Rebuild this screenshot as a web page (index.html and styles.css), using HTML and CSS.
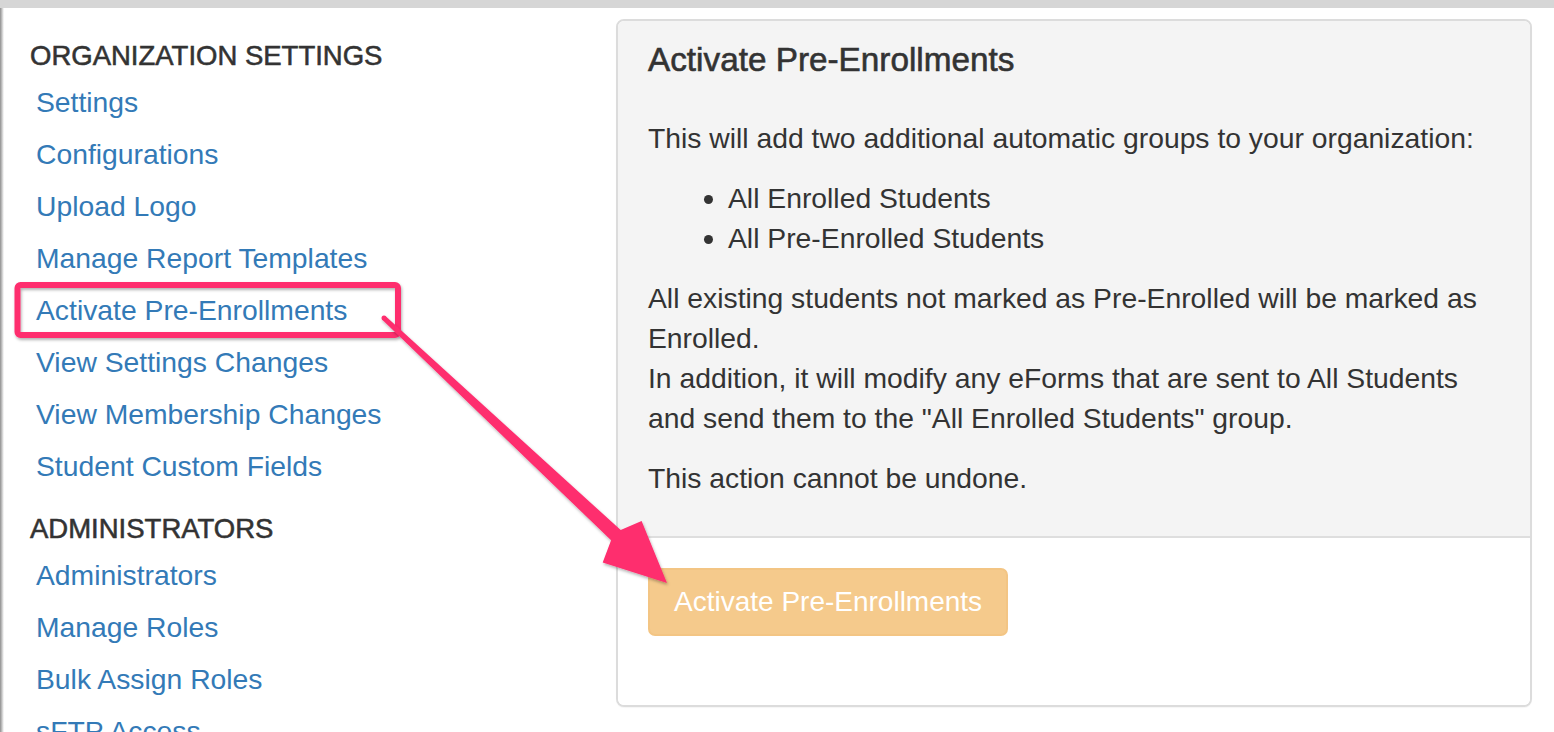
FILE: index.html
```html
<!DOCTYPE html>
<html lang="en">
<head>
<meta charset="utf-8">
<title>Activate Pre-Enrollments</title>
<link rel="stylesheet" href="styles.css">
</head>
<body>
<div class="topbar"></div>
<div class="layout">
  <div class="edge"></div>
  <nav class="sidebar">
    <h5 class="nav-heading">ORGANIZATION SETTINGS</h5>
    <a class="nav-link" href="#">Settings</a>
    <a class="nav-link" href="#">Configurations</a>
    <a class="nav-link" href="#">Upload Logo</a>
    <a class="nav-link" href="#">Manage Report Templates</a>
    <a class="nav-link" href="#">Activate Pre-Enrollments</a>
    <a class="nav-link" href="#">View Settings Changes</a>
    <a class="nav-link" href="#">View Membership Changes</a>
    <a class="nav-link" href="#">Student Custom Fields</a>
    <h5 class="nav-heading nav-heading-next">ADMINISTRATORS</h5>
    <a class="nav-link" href="#">Administrators</a>
    <a class="nav-link" href="#">Manage Roles</a>
    <a class="nav-link" href="#">Bulk Assign Roles</a>
    <a class="nav-link" href="#">sFTP Access</a>
  </nav>
  <main class="main">
    <section class="panel">
      <div class="panel-body">
        <h4 class="panel-title">Activate Pre-Enrollments</h4>
        <p>This will add two additional automatic groups to your organization:</p>
        <ul class="groups">
          <li>All Enrolled Students</li>
          <li>All Pre-Enrolled Students</li>
        </ul>
        <p>All existing students not marked as Pre-Enrolled will be marked as Enrolled.<br>In addition, it will modify any eForms that are sent to All Students and send them to the "All Enrolled Students" group.</p>
        <p>This action cannot be undone.</p>
      </div>
      <div class="panel-footer">
        <button class="btn-activate" type="button" disabled>Activate Pre-Enrollments</button>
      </div>
    </section>
  </main>
</div>
<svg class="annotations" width="1554" height="732" viewBox="0 0 1554 732" aria-hidden="true">
  <defs>
    <filter id="shadow" x="-10%" y="-10%" width="130%" height="130%">
      <feDropShadow dx="1" dy="2" stdDeviation="1.5" flood-color="#000" flood-opacity="0.3"/>
    </filter>
  </defs>
  <rect x="17.5" y="285" width="380.5" height="50" rx="3" fill="none" stroke="#fe2d6e" stroke-width="6" filter="url(#shadow)"/>
  <g filter="url(#shadow)">
    <polygon fill="#fe2d6e" points="385.7,316.2 620.7,530.1 641.6,520.9 667,583 602.7,562.5 611.1,540.3 382.3,319.8"/>
    <circle cx="384" cy="318" r="2.5" fill="#fe2d6e"/>
  </g>
</svg>
</body>
</html>
```

FILE: styles.css
```css
html, body {
  margin: 0;
  padding: 0;
  overflow: hidden;
  height: 100%;
}

body {
  position: relative;
  background: #ffffff;
  font-family: "Liberation Sans", Arial, sans-serif;
  font-size: 28.3px;
  line-height: 40px;
  color: #333333;
}

.topbar {
  height: 8px;
  background: #d6d6d6;
}

.layout {
  display: flex;
  align-items: flex-start;
  height: 724px;
}

.edge {
  width: 4px;
  align-self: stretch;
  flex: none;
  background: linear-gradient(to right, #8e8e8e 0, #b8b8b8 1.5px, #e4e4e4 3px, #ffffff 4px);
}

.sidebar {
  width: 586px;
  flex: none;
  padding: 28px 0 0 26px;
  display: flex;
  flex-direction: column;
  align-items: flex-start;
}

.nav-heading {
  margin: 0;
  font-size: 27.5px;
  line-height: 40px;
  font-weight: 400;
  color: #333333;
  -webkit-text-stroke: 0.55px #333333;
}

.nav-heading-next {
  margin-top: 17px;
  margin-bottom: 0;
}

.nav-link {
  display: block;
  padding-left: 6px;
  font-size: 28.3px;
  line-height: 52px;
  color: #337ab7;
  text-decoration: none;
}

.main {
  flex: none;
  padding-top: 11px;
}

.panel {
  width: 912px;
  border: 2px solid #dcdcdc;
  border-radius: 8px;
  background: #ffffff;
  overflow: hidden;
  box-shadow: 0 1px 1px rgba(0, 0, 0, 0.04);
}

.panel-body {
  background: #f4f4f4;
  padding: 21px 30px 18px 30px;
  border-bottom: 2px solid #dedede;
}

.panel-title {
  margin: 0 0 40px 0;
  font-size: 33.3px;
  line-height: 36px;
  font-weight: 400;
  color: #333333;
  -webkit-text-stroke: 0.6px #333333;
}

.panel-body p {
  margin: 0 0 20px 0;
}

.groups {
  margin: 0 0 20px 0;
  padding-left: 80px;
}

.panel-footer {
  padding: 30px 30px 69px 30px;
  background: #ffffff;
}

.btn-activate {
  display: inline-block;
  margin: 0;
  padding: 12px 24px;
  border: 2px solid #f3c584;
  border-radius: 7px;
  background: #f5ca8c;
  color: #ffffff;
  font-family: "Liberation Sans", Arial, sans-serif;
  font-size: 28px;
  line-height: 40px;
  cursor: not-allowed;
}

.annotations {
  position: absolute;
  top: 0;
  left: 0;
  pointer-events: none;
}
```
